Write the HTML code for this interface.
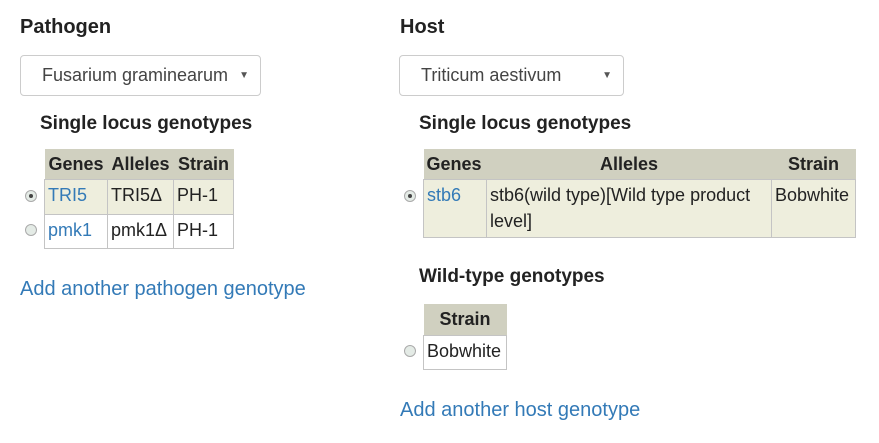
<!DOCTYPE html>
<html><head><style>
body{margin:0;width:879px;height:443px;background:#fff;font-family:"Liberation Sans",Arial,sans-serif;color:#222;position:relative;overflow:hidden}
h3{position:absolute;margin:0;font-size:20px;font-weight:bold;color:#222;white-space:nowrap}
h4{position:absolute;margin:0;font-size:19px;font-weight:bold;color:#222;white-space:nowrap}
.sel{position:absolute;border:1px solid #ccc;border-radius:4px;box-sizing:border-box;height:41px;font-size:18px;color:#444;background:#fff}
.sel span{position:absolute;top:9px;white-space:nowrap}
.sel i{position:absolute;right:11px;top:14px;font-style:normal;font-size:10px;color:#555}
table{position:absolute;border-collapse:collapse;font-size:18px;table-layout:fixed}
th{background:#d0d0c0;font-weight:bold;padding:0 3px;height:30px;border:none;white-space:nowrap;overflow:visible}
td{border:1px solid #c4c4c4;padding:2px 3px 0;vertical-align:top;line-height:26px;white-space:nowrap;box-sizing:border-box}
tr.o td{background:#eeeedd}
a{color:#337ab7;text-decoration:none}
.r{position:absolute;width:12px;height:12px;border-radius:50%;border:1px solid #aaa;background:#e4ebe6;box-sizing:border-box}
.r.on::after{content:"";position:absolute;left:3px;top:3px;width:4px;height:4px;border-radius:50%;background:#444}
.lnk{position:absolute;font-size:20px;color:#337ab7;white-space:nowrap}
</style></head><body>
<h3 style="left:20px;top:16px">Pathogen</h3>
<div class="sel" style="left:20px;top:55px;width:241px"><span style="left:21px">Fusarium graminearum</span><i>▼</i></div>
<h4 style="left:40px;top:113px">Single locus genotypes</h4>
<table style="left:44px;top:149px;width:189px">
<col style="width:63px"><col style="width:66px"><col style="width:60px">
<tr><th>Genes</th><th>Alleles</th><th>Strain</th></tr>
<tr class="o"><td style="height:35px"><a>TRI5</a></td><td>TRI5Δ</td><td>PH-1</td></tr>
<tr><td style="height:34px"><a>pmk1</a></td><td>pmk1Δ</td><td>PH-1</td></tr>
</table>
<div class="r on" style="left:25px;top:190px"></div>
<div class="r" style="left:25px;top:224px"></div>
<div class="lnk" style="left:20px;top:278px">Add another pathogen genotype</div>

<h3 style="left:400px;top:16px">Host</h3>
<div class="sel" style="left:399px;top:55px;width:225px"><span style="left:21px">Triticum aestivum</span><i>▼</i></div>
<h4 style="left:419px;top:113px">Single locus genotypes</h4>
<table style="left:423px;top:149px;width:432px">
<col style="width:63px"><col style="width:285px"><col style="width:84px">
<tr><th style="text-align:left">Genes</th><th>Alleles</th><th>Strain</th></tr>
<tr class="o"><td style="height:58px"><a>stb6</a></td><td style="white-space:normal">stb6(wild type)[Wild type product level]</td><td>Bobwhite</td></tr>
</table>
<div class="r on" style="left:404px;top:190px"></div>
<h4 style="left:419px;top:266px">Wild-type genotypes</h4>
<table style="left:423px;top:304px;width:83px">
<col style="width:83px">
<tr><th style="height:31px">Strain</th></tr>
<tr><td style="height:34px">Bobwhite</td></tr>
</table>
<div class="r" style="left:404px;top:345px"></div>
<div class="lnk" style="left:400px;top:399px">Add another host genotype</div>
</body></html>
